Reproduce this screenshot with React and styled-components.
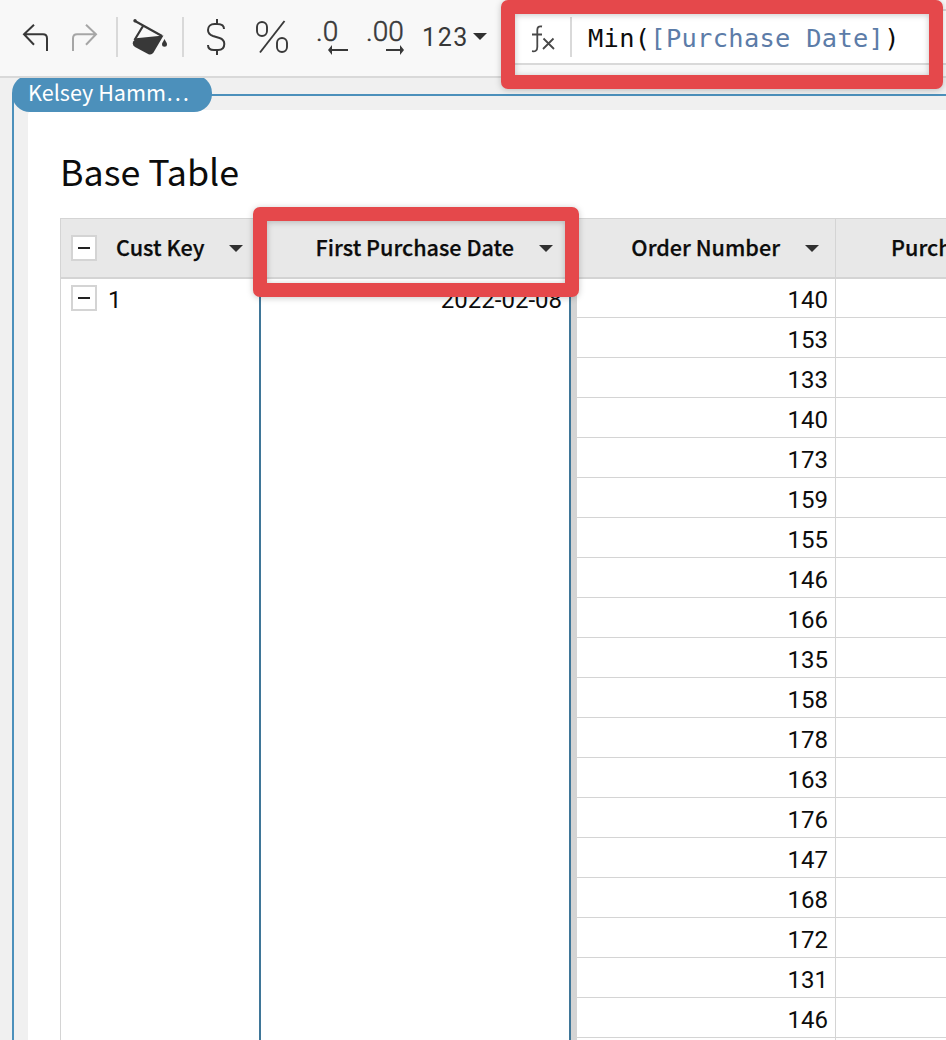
import React from 'react';
import styled, { createGlobalStyle } from 'styled-components';

const sans = '"Noto Sans CJK SC", "Open Sans", sans-serif';
const numeric = 'Roboto, "Liberation Sans", sans-serif';
const ink = '#383838';
const line = '#d4d4d4';

const GlobalStyle = createGlobalStyle`
  *, *::before, *::after { box-sizing: border-box; }
  html, body { margin: 0; padding: 0; overflow: hidden; }
`;

const Page = styled.div`
  position: relative;
  display: flex;
  flex-direction: column;
  width: 946px;
  height: 1040px;
  overflow: hidden;
  background: #f0f0f0;
  color: #0c0c0c;
  font-family: ${sans};
`;

const Toolbar = styled.header`
  display: flex;
  align-items: flex-start;
  flex: none;
  height: 78px;
  padding-left: 22px;
  background: #f8f8f8;
  border-bottom: 2px solid #d9d9d9;
`;

const Tool = styled.div`
  position: relative;
  flex: none;
  width: ${(p) => p.$width}px;
  height: 76px;
  margin-right: ${(p) => p.$gap || 0}px;
  color: ${(p) => (p.$muted ? '#a6a6a6' : ink)};
  svg { display: block; }
`;

const Divider = styled.div`
  flex: none;
  width: 2px;
  height: 40px;
  margin: 17px ${(p) => p.$gap}px 0 0;
  background: #d9d9d9;
`;

const Decimals = styled.div`
  padding-top: 15px;
  font: 300 28px/33px ${numeric};
  -webkit-text-stroke: 0.5px ${ink};
  white-space: nowrap;
`;

const DecimalArrow = styled.svg`
  margin-left: ${(p) => p.$indent}px;
  margin-top: -4px;
`;

const FormatName = styled.div`
  padding-top: 23px;
  font: 400 25px/30px ${numeric};
  letter-spacing: 1.6px;
`;

const Caret = styled.span`
  flex: none;
  width: 0;
  height: 0;
  border: 7px solid transparent;
  border-top-color: #303030;
  border-bottom: 0;
`;

const FormatCaret = styled(Caret)`
  margin: 33px 20px 0 0;
`;

const FormulaBar = styled.div`
  display: flex;
  flex: 1;
  height: 56px;
  margin-top: 9px;
  padding-left: 22px;
  background: #fff;
  border: 2px solid #d9d9d9;
  border-right: 0;
`;

const FormulaDivider = styled.div`
  width: 2px;
  height: 40px;
  margin: 6px 16px 0 15px;
  background: #d9d9d9;
`;

const Formula = styled.code`
  padding-top: 11px;
  font: 400 25.4px/32px "DejaVu Sans Mono", monospace;
  letter-spacing: 0.3px;
  white-space: pre;
`;

const FieldRef = styled.span`
  color: #5c7ca8;
`;

const Canvas = styled.main`
  position: relative;
  flex: 1;
  min-height: 0;
  padding: 16px 0 0 12px;
  overflow: hidden;
`;

const Selection = styled.section`
  height: 100%;
  padding: 14px 0 0 14px;
  border: 2px solid #4c90bb;
  border-width: 2px 0 0 2px;
`;

const OwnerTag = styled.div`
  position: absolute;
  top: -3px;
  left: 12px;
  width: 200px;
  height: 37px;
  padding: 3px 0 0 16px;
  border-radius: 18px;
  background: #4c90bb;
  color: #fff;
  font-size: 21.6px;
  line-height: 27px;
  white-space: nowrap;
`;

const Card = styled.div`
  height: 100%;
  padding: 34px 0 0 32px;
  border-top-left-radius: 5px;
  background: #fff;
`;

const Title = styled.h1`
  height: 74px;
  margin: 0;
  font-size: 35.8px;
  font-weight: 400;
  line-height: 52px;
`;

const Table = styled.div`
  border: 1px solid ${line};
  border-width: 1px 0 0 1px;
`;

const columns = '198px 312px 6px 259px 1fr';

const HeaderRow = styled.div`
  display: grid;
  grid-template-columns: ${columns};
  height: 60px;
  background: #e8e8e8;
  border-bottom: 2px solid ${line};
`;

const HeaderCell = styled.div`
  display: flex;
  align-items: center;
  justify-content: flex-end;
  padding-right: ${(p) => p.$right}px;
  border-right: ${(p) => (p.$ruled ? `1px solid ${line}` : 0)};
  box-shadow: ${(p) => (p.$selected ? 'inset 0 2px #3f7698' : 'none')};
  font-size: 21.6px;
  font-weight: 500;
  line-height: 32px;
  white-space: nowrap;
`;

const LeadHeader = styled(HeaderCell)`
  justify-content: flex-start;
  padding-left: 10px;
`;

const HeaderLabel = styled.span`
  margin-right: ${(p) => p.$gap}px;
  padding-bottom: 2px;
  -webkit-text-stroke: 0.25px currentColor;
`;

const CutHeader = styled(HeaderCell)`
  justify-content: flex-start;
  padding-left: 55px;
  overflow: hidden;
`;

const Toggle = styled.span`
  display: flex;
  align-items: center;
  justify-content: center;
  flex: none;
  width: 26px;
  height: 26px;
  margin-right: ${(p) => p.$gap}px;
  border: 2px solid ${line};
  background: #fff;
  &::before {
    content: '';
    width: 12px;
    height: 2px;
    background: #222;
  }
`;

const Body = styled.div`
  display: grid;
  grid-template-columns: ${columns};
  height: 780px;
  font: 400 24px/40px ${numeric};
`;

const KeyCell = styled.div`
  display: flex;
  align-items: center;
  height: 40px;
  padding: 0 0 2px 10px;
`;

const KeyValue = styled.span`
  padding-top: 3px;
`;

const SelectedColumn = styled.div`
  padding: 1px 7px 0 0;
  border: 2px solid #3f7698;
  border-width: 0 2px;
  text-align: right;
`;

const GroupBar = styled.div`
  background: ${line};
`;

const Column = styled.div`
  border-right: ${(p) => (p.$ruled ? `1px solid ${line}` : 0)};
`;

const NumberCell = styled.div`
  height: 40px;
  padding-right: 7px;
  border-bottom: 1px solid ${line};
  line-height: 44px;
  text-align: right;
  &:first-child {
    height: 39px;
    line-height: 42px;
  }
`;

const Callout = styled.div`
  position: absolute;
  left: ${(p) => p.$x}px;
  top: ${(p) => p.$y}px;
  width: ${(p) => p.$w}px;
  height: ${(p) => p.$h}px;
  border: 14px solid #e5484b;
  border-radius: 7px;
  filter: drop-shadow(0 1px 3px rgba(0, 0, 0, 0.22));
  pointer-events: none;
`;

const orders = [140, 153, 133, 140, 173, 159, 155, 146, 166, 135, 158, 178, 163, 176, 147, 168, 172, 131, 146];

const stroke = { fill: 'none', stroke: 'currentColor', strokeWidth: 2 };

const UndoIcon = () => (
  <svg width="27" height="76" viewBox="22 0 27 76" {...stroke}>
    <path d="M34 24.8 24 34.3 34 44.8M24 34.3H43Q47 34.3 47 38.5V51" />
  </svg>
);

const RedoIcon = () => (
  <svg width="27" height="76" viewBox="71 0 27 76" {...stroke}>
    <path d="M86 24.8 96 34.3 86 44.8M96 34.3H77Q73 34.3 73 38.5V51" />
  </svg>
);

const FillIcon = () => (
  <svg width="36" height="76" viewBox="132 0 36 76" {...stroke}>
    <path d="M135 21 162 36M143 26 134.5 40" strokeWidth="2.2" />
    <circle cx="135" cy="20.8" r="1.7" fill="currentColor" stroke="none" />
    <path d="M136 38.2 163.5 35.5 153.5 52.5Q151.5 55.5 148.5 54.2L135 47Q131.8 44.8 133.2 41.5Z" fill="currentColor" stroke="none" />
    <path d="M164.5 39C163 42 162 43 162 44.3A2.5 2.5 0 0 0 167 44.3C167 43 166 42 164.5 39Z" fill="currentColor" stroke="none" />
  </svg>
);

const CurrencyIcon = () => (
  <svg width="20" height="76" viewBox="206 0 20 76" {...stroke}>
    <path d="M217 19V24M217 50V55M224 29C224 26 221.5 24 217.5 24H214.5C210.5 24 208 26.5 208 30C208 33.5 210 35 213 36L219.5 38C222.5 39 224.3 41 224.3 44C224.3 47.8 222 50 218 50H214C210 50 208 48 208 45" />
  </svg>
);

const PercentIcon = () => (
  <svg width="34" height="76" viewBox="255 0 34 76" {...stroke} strokeWidth="1.9">
    <rect x="257" y="22" width="10" height="14" rx="5" />
    <rect x="277" y="38" width="10" height="14" rx="5" />
    <path d="M284.5 21 260 52.5" />
  </svg>
);

const FunctionIcon = () => (
  <svg width="24" height="52" viewBox="531 11 24 52" fill="none" stroke="#484848" strokeWidth="1.8">
    <path d="M542 26.5C538.5 25.7 537.3 27.5 537.3 30V47C537.3 50.5 535.5 51.7 532 51.2M532 34.5H542M543.5 38.5 554 49M553.5 38.5 543 49" />
  </svg>
);

export default function App() {
  return (
    <Page>
      <GlobalStyle />
      <Toolbar>
        <Tool $width={27} $gap={22}><UndoIcon /></Tool>
        <Tool $width={27} $gap={18} $muted><RedoIcon /></Tool>
        <Divider $gap={14} />
        <Tool $width={36} $gap={14}><FillIcon /></Tool>
        <Divider $gap={22} />
        <Tool $width={20} $gap={29}><CurrencyIcon /></Tool>
        <Tool $width={34} $gap={27}><PercentIcon /></Tool>
        <Tool $width={32} $gap={18}>
          <Decimals>.0</Decimals>
          <DecimalArrow $indent={12} width="20" height="12" viewBox="0 0 20 12">
            <path d="M0 6 4 1V5H20V7H4V11Z" fill={ink} />
          </DecimalArrow>
        </Tool>
        <Tool $width={39} $gap={17}>
          <Decimals>.00</Decimals>
          <DecimalArrow $indent={20} width="18" height="12" viewBox="0 0 18 12">
            <path d="M18 6 14 1V5H0V7H14V11Z" fill={ink} />
          </DecimalArrow>
        </Tool>
        <Tool $width={51}><FormatName>123</FormatName></Tool>
        <FormatCaret />
        <FormulaBar>
          <FunctionIcon />
          <FormulaDivider />
          <Formula>Min(<FieldRef>[Purchase Date]</FieldRef>)</Formula>
        </FormulaBar>
      </Toolbar>
      <Canvas>
        <Selection>
          <Card>
            <Title>Base Table</Title>
            <Table>
              <HeaderRow>
                <LeadHeader $right={16}>
                  <Toggle $gap={19} />
                  <HeaderLabel $gap={25}>Cust Key</HeaderLabel>
                  <Caret />
                </LeadHeader>
                <HeaderCell $right={18} $selected>
                  <HeaderLabel $gap={25}>First Purchase Date</HeaderLabel>
                  <Caret />
                </HeaderCell>
                <HeaderCell />
                <HeaderCell $right={16} $ruled>
                  <HeaderLabel $gap={25}>Order Number</HeaderLabel>
                  <Caret />
                </HeaderCell>
                <CutHeader>
                  <HeaderLabel>Purchase Date</HeaderLabel>
                </CutHeader>
              </HeaderRow>
              <Body>
                <KeyCell><Toggle $gap={11} /><KeyValue>1</KeyValue></KeyCell>
                <SelectedColumn>2022-02-08</SelectedColumn>
                <GroupBar />
                <Column $ruled>
                  {orders.map((n, i) => <NumberCell key={i}>{n}</NumberCell>)}
                </Column>
                <Column>
                  {orders.map((n, i) => <NumberCell key={i} />)}
                </Column>
              </Body>
            </Table>
          </Card>
        </Selection>
        <OwnerTag>Kelsey Hamm…</OwnerTag>
      </Canvas>
      <Callout $x={501} $y={-0.5} $w={442} $h={89.5} />
      <Callout $x={253} $y={206.5} $w={326} $h={90.5} />
    </Page>
  );
}
